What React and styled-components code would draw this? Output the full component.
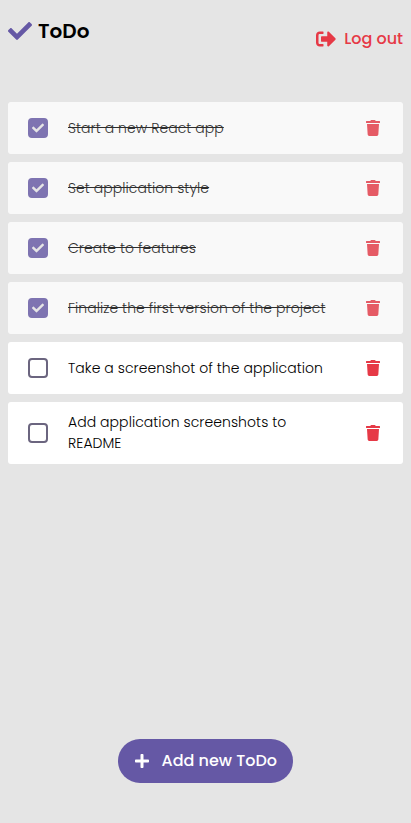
import React from "react";
import styled, { createGlobalStyle } from "styled-components";
import { FaCheck, FaPlus, FaSignOutAlt, FaTrash } from "react-icons/fa";

const GlobalStyle = createGlobalStyle`
  * { box-sizing: border-box; }
  body {
    margin: 0;
    background: #e5e5e5;
    color: #000;
    font-family: Poppins, Inter, "Open Sans", sans-serif;
  }
  button { font-family: inherit; border: 0; padding: 0; background: none; cursor: pointer; }
`;

const Page = styled.div`
  min-height: 100vh;
  padding: 0 8px 40px;
  display: flex;
  flex-direction: column;
`;

const Header = styled.header`
  height: 102px;
  display: flex;
  justify-content: space-between;
  align-items: flex-start;
`;

const Logo = styled.h1`
  margin: 16px 0 0;
  height: 30px;
  display: flex;
  align-items: center;
  gap: 6px;
  font-size: 20px;
  font-weight: 600;
  line-height: 30px;
  svg { width: 24px; height: 24px; color: #6558a5; }
`;

const Logout = styled.button`
  && { margin-top: 27px; }
  height: 24px;
  display: flex;
  align-items: center;
  gap: 8px;
  color: #e63946;
  font-size: 16px;
  font-weight: 500;
  line-height: 24px;
  white-space: nowrap;
  svg { width: 20px; height: 20px; }
`;

const List = styled.ul`
  list-style: none;
  margin: 0;
  padding: 0;
  display: flex;
  flex-direction: column;
  gap: 8px;
`;

const Item = styled.li`
  min-height: 52px;
  padding: 10px 20px;
  display: flex;
  align-items: center;
  background: #fff;
  border-radius: 3px;
  opacity: ${({ $done }) => ($done ? 0.8 : 1)};
`;

const Checkbox = styled.button`
  flex: none;
  width: 20px;
  height: 20px;
  display: flex;
  align-items: center;
  justify-content: center;
  border-radius: 4px;
  && {
    color: #e5e5e5;
    border: 2px solid ${({ $done }) => ($done ? "#6558a5" : "#6b657f")};
    background: ${({ $done }) => ($done ? "#6558a5" : "transparent")};
  }
  svg { width: 12px; height: 12px; flex: none; }
`;

const Label = styled.span`
  flex: 1;
  margin: 0 28px 0 20px;
  font-size: 14px;
  font-weight: 300;
  line-height: 21px;
  letter-spacing: 0.06px;
  text-decoration: ${({ $done }) => ($done ? "line-through" : "none")};
`;

const Remove = styled.button`
  flex: none;
  width: 20px;
  height: 20px;
  display: flex;
  align-items: center;
  justify-content: center;
  color: #e63946;
  svg { width: 16px; height: 16px; }
`;

const AddButton = styled.button`
  && {
    margin: auto auto 0;
    width: 175px;
    height: 44px;
    padding: 0 16px;
    background: #6558a5;
  }
  display: flex;
  align-items: center;
  justify-content: space-between;
  border-radius: 22px;
  color: #fff;
  font-size: 16px;
  font-weight: 500;
  white-space: nowrap;
  svg { width: 16px; height: 16px; }
`;

const AddText = styled.span`
  padding-bottom: 2px;
`;

const todos = [
  { text: "Start a new React app", done: true },
  { text: "Set application style", done: true },
  { text: "Create to features", done: true },
  { text: "Finalize the first version of the project", done: true },
  { text: "Take a screenshot of the application", done: false },
  { text: "Add application screenshots to README", done: false },
];

export default function App() {
  return (
    <>
      <GlobalStyle />
      <Page>
        <Header>
          <Logo><FaCheck />ToDo</Logo>
          <Logout><FaSignOutAlt />Log out</Logout>
        </Header>
        <List>
          {todos.map(({ text, done }) => (
            <Item key={text} $done={done}>
              <Checkbox $done={done} aria-label={text}>{done && <FaCheck />}</Checkbox>
              <Label $done={done}>{text}</Label>
              <Remove aria-label="Delete"><FaTrash /></Remove>
            </Item>
          ))}
        </List>
        <AddButton><FaPlus /><AddText>Add new ToDo</AddText></AddButton>
      </Page>
    </>
  );
}
